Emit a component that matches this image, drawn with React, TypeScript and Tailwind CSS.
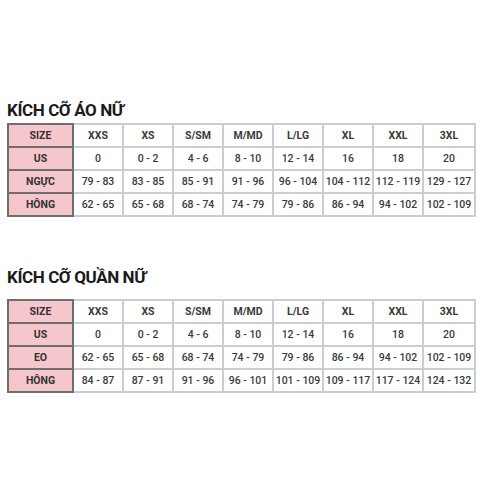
import React from "react";

const cols = ["XXS", "XS", "S/SM", "M/MD", "L/LG", "XL", "XXL", "3XL"];

const table1: [string, string[]][] = [
  ["SIZE", cols],
  ["US", ["0", "0 - 2", "4 - 6", "8 - 10", "12 - 14", "16", "18", "20"]],
  ["NGỰC", ["79 - 83", "83 - 85", "85 - 91", "91 - 96", "96 - 104", "104 - 112", "112 - 119", "129 - 127"]],
  ["HÔNG", ["62 - 65", "65 - 68", "68 - 74", "74 - 79", "79 - 86", "86 - 94", "94 - 102", "102 - 109"]],
];

const table2: [string, string[]][] = [
  ["SIZE", cols],
  ["US", ["0", "0 - 2", "4 - 6", "8 - 10", "12 - 14", "16", "18", "20"]],
  ["EO", ["62 - 65", "65 - 68", "68 - 74", "74 - 79", "79 - 86", "86 - 94", "94 - 102", "102 - 109"]],
  ["HÔNG", ["84 - 87", "87 - 91", "91 - 96", "96 - 101", "101 - 109", "109 - 117", "117 - 124", "124 - 132"]],
];

function SizeTable({ rows }: { rows: [string, string[]][] }) {
  return (
    <div className="grid grid-cols-[67px_repeat(7,50px)_52px] w-max">
      {rows.map(([label, vals], r) => (
        <React.Fragment key={r}>
          <div
            className={`h-[23px] flex items-center justify-center bg-[#f5c6cb] border-l-2 border-r-2 border-b-2 border-[#6e6e6e] text-[10.5px] font-bold text-[#333] ${
              r === 0 ? "border-t-2 h-[25px]" : ""
            }`}
          >
            {label}
          </div>
          {vals.map((v, c) => (
            <div
              key={c}
              className={`h-[23px] flex items-center justify-center border-r-2 border-b-2 border-[#cdcdcd] text-[10.5px] text-[#3a3a3a] ${
                r === 0 ? "border-t-2 h-[25px] font-bold" : "font-medium"
              }`}
            >
              {v}
            </div>
          ))}
        </React.Fragment>
      ))}
    </div>
  );
}

export default function App() {
  return (
    <div
      className="w-[480px] h-[480px] bg-white pl-[7px] pt-[100px]"
      style={{ fontFamily: "Roboto, 'Noto Sans', sans-serif" }}
    >
      <h1 className="text-[17px] leading-[20px] font-bold text-[#1a1a1a] tracking-[-0.4px]">KÍCH CỠ ÁO NỮ</h1>
      <div className="mt-[3px]">
        <SizeTable rows={table1} />
      </div>
      <h1 className="mt-[50px] text-[17px] leading-[20px] font-bold text-[#1a1a1a] tracking-[-0.4px]">KÍCH CỠ QUẦN NỮ</h1>
      <div className="mt-[12px]">
        <SizeTable rows={table2} />
      </div>
    </div>
  );
}
